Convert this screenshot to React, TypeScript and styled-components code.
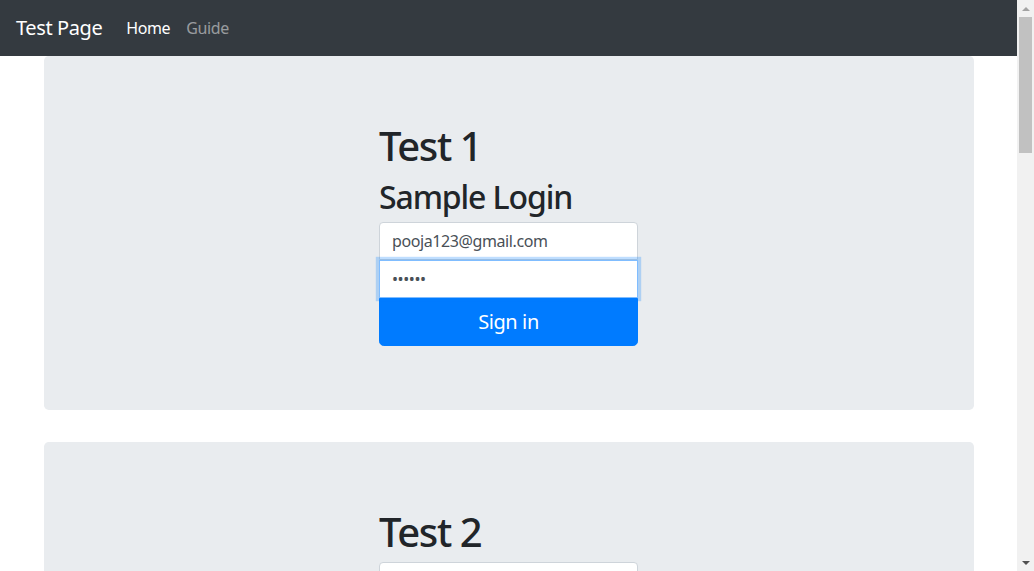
import React from "react";
import styled, { createGlobalStyle } from "styled-components";

const GlobalStyle = createGlobalStyle`
  html, body { margin: 0; padding: 0; height: 100%; overflow: hidden; }
  body {
    font-family: "Noto Sans", "Open Sans", Arial, sans-serif;
    letter-spacing: -0.025em;
    color: #212529;
    background: #fff;
  }
  * { box-sizing: border-box; }
`;

const Shell = styled.div`
  display: flex;
  height: 571px;
  width: 100%;
`;

const Viewport = styled.div`
  flex: 1;
  min-width: 0;
  overflow: hidden;
`;

const Navbar = styled.nav`
  display: flex;
  align-items: center;
  height: 56px;
  padding: 8px 16px;
  background: #343a40;
`;

const Brand = styled.a`
  font-size: 20px;
  line-height: 30px;
  padding: 5px 0;
  margin-right: 16px;
  color: #fff;
  text-decoration: none;
  white-space: nowrap;
`;

const NavLink = styled.a<{ $active?: boolean }>`
  font-size: 16px;
  line-height: 24px;
  padding: 8px;
  color: ${(p) => (p.$active ? "#fff" : "rgba(255,255,255,0.5)")};
  text-decoration: none;
`;

const Container = styled.main`
  max-width: 960px;
  margin: 0 auto;
  padding: 0 15px;
`;

const Jumbotron = styled.section`
  background: #e9ecef;
  border-radius: 4.8px;
  padding: 64px 32px;
  margin-bottom: 32px;
  display: flex;
  justify-content: center;
`;

const FormCol = styled.div`
  width: 259px;
`;

const H1 = styled.h1`
  margin: 0 0 8px;
  font-size: 40px;
  line-height: 48px;
  font-weight: 500;
  letter-spacing: -0.035em;
  padding-top: 2px;
  height: 48px;
`;

const H2 = styled.h2`
  margin: 0 0 8px;
  font-size: 32px;
  line-height: 38.4px;
  font-weight: 500;
  letter-spacing: -0.035em;
  padding-top: 2px;
  height: 38.4px;
`;

const Input = styled.input<{ $pos: "top" | "mid"; $focus?: boolean }>`
  display: block;
  width: 100%;
  height: 38px;
  padding: 6px 12px;
  font-family: inherit;
  letter-spacing: inherit;
  font-size: 16px;
  color: #495057;
  background: #fff;
  border: 1px solid ${(p) => (p.$focus ? "#80bdff" : "#ced4da")};
  border-radius: ${(p) => (p.$pos === "top" ? "4px 4px 0 0" : "0")};
  box-shadow: ${(p) => (p.$focus ? "0 0 0 3.2px rgba(0,123,255,0.25)" : "none")};
  outline: none;
  position: relative;
  z-index: ${(p) => (p.$focus ? 1 : 0)};
`;

const Button = styled.button`
  display: block;
  width: 100%;
  height: 48px;
  padding: 8px 16px;
  font-family: inherit;
  letter-spacing: inherit;
  font-size: 20px;
  line-height: 30px;
  color: #fff;
  background: #007bff;
  border: 1px solid #007bff;
  border-radius: 0 0 4.8px 4.8px;
`;

const Scrollbar = styled.div`
  width: 17px;
  flex: 0 0 17px;
  background: #f1f1f1;
  display: flex;
  flex-direction: column;
  align-items: center;
`;

const Arrow = styled.div<{ $dir: "up" | "down" }>`
  height: 17px;
  width: 17px;
  display: flex;
  align-items: center;
  justify-content: center;
  &::before {
    content: "";
    width: 0;
    height: 0;
    border-left: 4px solid transparent;
    border-right: 4px solid transparent;
    ${(p) =>
      p.$dir === "up"
        ? "border-bottom: 4px solid #a3a3a3;"
        : "border-top: 4px solid #505050;"}
  }
`;

const Track = styled.div`
  flex: 1;
  width: 100%;
  display: flex;
  justify-content: center;
`;

const Thumb = styled.div`
  width: 13px;
  height: 136px;
  background: #c1c1c1;
`;

export default function App() {
  return (
    <>
      <GlobalStyle />
      <Shell>
        <Viewport>
          <Navbar>
            <Brand href="#">Test Page</Brand>
            <NavLink href="#" $active>
              Home
            </NavLink>
            <NavLink href="#">Guide</NavLink>
          </Navbar>
          <Container>
            <Jumbotron>
              <FormCol>
                <H1>Test 1</H1>
                <H2>Sample Login</H2>
                <Input $pos="top" type="email" defaultValue="pooja123@gmail.com" readOnly />
                <Input $pos="mid" $focus type="password" defaultValue="123456" readOnly />
                <Button>Sign in</Button>
              </FormCol>
            </Jumbotron>
            <Jumbotron>
              <FormCol>
                <H1>Test 2</H1>
                <Input $pos="top" type="email" readOnly />
              </FormCol>
            </Jumbotron>
          </Container>
        </Viewport>
        <Scrollbar>
          <Arrow $dir="up" />
          <Track>
            <Thumb />
          </Track>
          <Arrow $dir="down" />
        </Scrollbar>
      </Shell>
    </>
  );
}
